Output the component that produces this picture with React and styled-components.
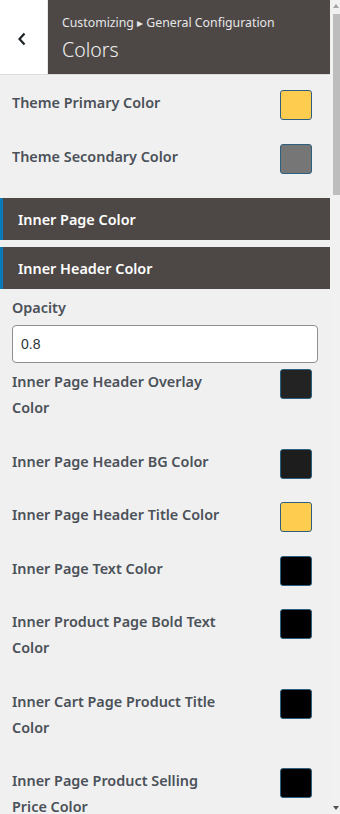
import React from 'react';
import styled, { createGlobalStyle } from 'styled-components';

const GlobalStyle = createGlobalStyle`
  html, body {
    margin: 0;
    padding: 0;
    background: #f0f0f1;
  }
  * {
    box-sizing: border-box;
  }
`;

const themeColors = [
  { label: 'Theme Primary Color', color: '#fecd50' },
  { label: 'Theme Secondary Color', color: '#767676' },
];

const headerColors = [
  { label: 'Inner Page Header Overlay Color', color: '#232323' },
  { label: 'Inner Page Header BG Color', color: '#1d1d1d' },
  { label: 'Inner Page Header Title Color', color: '#fecd50' },
  { label: 'Inner Page Text Color', color: '#000000' },
  { label: 'Inner Product Page Bold Text Color', color: '#000000' },
  { label: 'Inner Cart Page Product Title Color', color: '#000000' },
  { label: 'Inner Page Product Selling Price Color', color: '#000000' },
];

const App = () => {
  return (
    <>
      <GlobalStyle />
      <Pane>
        <Content>
          <Header>
            <BackButton aria-label="Back">
              <svg width="10" height="14" viewBox="0 0 10 14">
                <path d="M7.5 1.5 L2.5 7 L7.5 12.5" fill="none" stroke="#1d2327" strokeWidth="2.2" />
              </svg>
            </BackButton>
            <Titles>
              <Crumb>Customizing ▸ General Configuration</Crumb>
              <Title>Colors</Title>
            </Titles>
          </Header>

          <Body>
            <Group>
              {themeColors.map((item) => (
                <ColorRow key={item.label}>
                  <Label>{item.label}</Label>
                  <Swatch $color={item.color} />
                </ColorRow>
              ))}
            </Group>

            <Sections>
              <SectionBar>Inner Page Color</SectionBar>
              <SectionBar>Inner Header Color</SectionBar>
            </Sections>

            <Field>
              <FieldLabel>Opacity</FieldLabel>
              <TextInput defaultValue="0.8" />
            </Field>

            <Group>
              {headerColors.map((item) => (
                <ColorRow key={item.label}>
                  <Label>{item.label}</Label>
                  <Swatch $color={item.color} />
                </ColorRow>
              ))}
            </Group>
          </Body>
        </Content>

        <ScrollTrack>
          <Arrow $up />
          <Thumb />
          <Arrow />
        </ScrollTrack>
      </Pane>
    </>
  );
};

export default App;

const Pane = styled.div`
  display: flex;
  height: 814px;
  width: 340px;
  overflow: hidden;
  background: #f0f0f1;
  font-family: 'Noto Sans', 'Open Sans', sans-serif;
`;

const Content = styled.div`
  width: 330px;
  flex: none;
  overflow: hidden;
`;

const ScrollTrack = styled.div`
  width: 10px;
  display: flex;
  flex-direction: column;
  align-items: center;
  background: #f1f1f1;
  padding: 4px 0 4px 2px;
`;

const Arrow = styled.span`
  width: 0;
  height: 0;
  border-left: 3.5px solid transparent;
  border-right: 3.5px solid transparent;
  ${(p) =>
    p.$up
      ? 'border-bottom: 4px solid #a3a3a3;'
      : 'border-top: 4px solid #505050;'}
`;

const Thumb = styled.span`
  width: 7px;
  height: 181px;
  margin: 6px 0 auto 0;
  background: #bdbdbd;
`;

const Header = styled.div`
  display: flex;
  height: 75px;
  border-bottom: 1px solid #dcdcde;
`;

const BackButton = styled.div`
  width: 48px;
  display: flex;
  align-items: center;
  justify-content: center;
  background: #ffffff;
  border-right: 1px solid #e8e8e8;
  padding: 3px 3px 0 0;
`;

const Titles = styled.div`
  flex: 1;
  background: #4d4846;
  padding: 14px 14px 0 14px;
  display: flex;
  flex-direction: column;
`;

const Crumb = styled.span`
  font-size: 12.3px;
  line-height: 18px;
  color: #e6e6e6;
`;

const Title = styled.span`
  margin-top: 5px;
  font-size: 19.5px;
  line-height: 26px;
  font-weight: 300;
  color: #f0f0f0;
`;

const Body = styled.div`
  padding-top: 15px;
`;

const Group = styled.div`
  display: flex;
  flex-direction: column;
  padding: 0 18px 0 12px;
`;

const ColorRow = styled.div`
  display: flex;
  justify-content: space-between;
  align-items: flex-start;
  margin-bottom: 27.5px;
`;

const Label = styled.span`
  max-width: 212px;
  font-size: 14.4px;
  line-height: 26px;
  font-weight: 600;
  color: #4b5158;
`;

const Swatch = styled.span`
  flex: none;
  width: 32px;
  height: 30px;
  margin-bottom: -4px;
  border-radius: 3px;
  border: 1px solid #2c5f80;
  background: ${(p) => p.$color};
`;

const Sections = styled.div`
  display: flex;
  flex-direction: column;
  gap: 7px;
  margin-top: 1px;
`;

const SectionBar = styled.div`
  height: 42px;
  display: flex;
  align-items: center;
  padding-left: 15px;
  background: #4d4846;
  border-left: 3px solid #0a7ab8;
  color: #ffffff;
  font-size: 14.4px;
  font-weight: 600;
`;

const Field = styled.div`
  display: flex;
  flex-direction: column;
  padding: 6px 12px 6px 12px;
`;

const FieldLabel = styled.span`
  font-size: 14.4px;
  line-height: 26px;
  font-weight: 600;
  color: #4b5158;
  margin-bottom: 4px;
`;

const TextInput = styled.input`
  height: 38px;
  width: 306px;
  border: 1px solid #8c8f94;
  border-radius: 4px;
  background: #ffffff;
  padding: 0 8px;
  font-family: 'Liberation Sans', Arial, sans-serif;
  font-size: 14px;
  color: #2c3338;
  outline: none;
`;
